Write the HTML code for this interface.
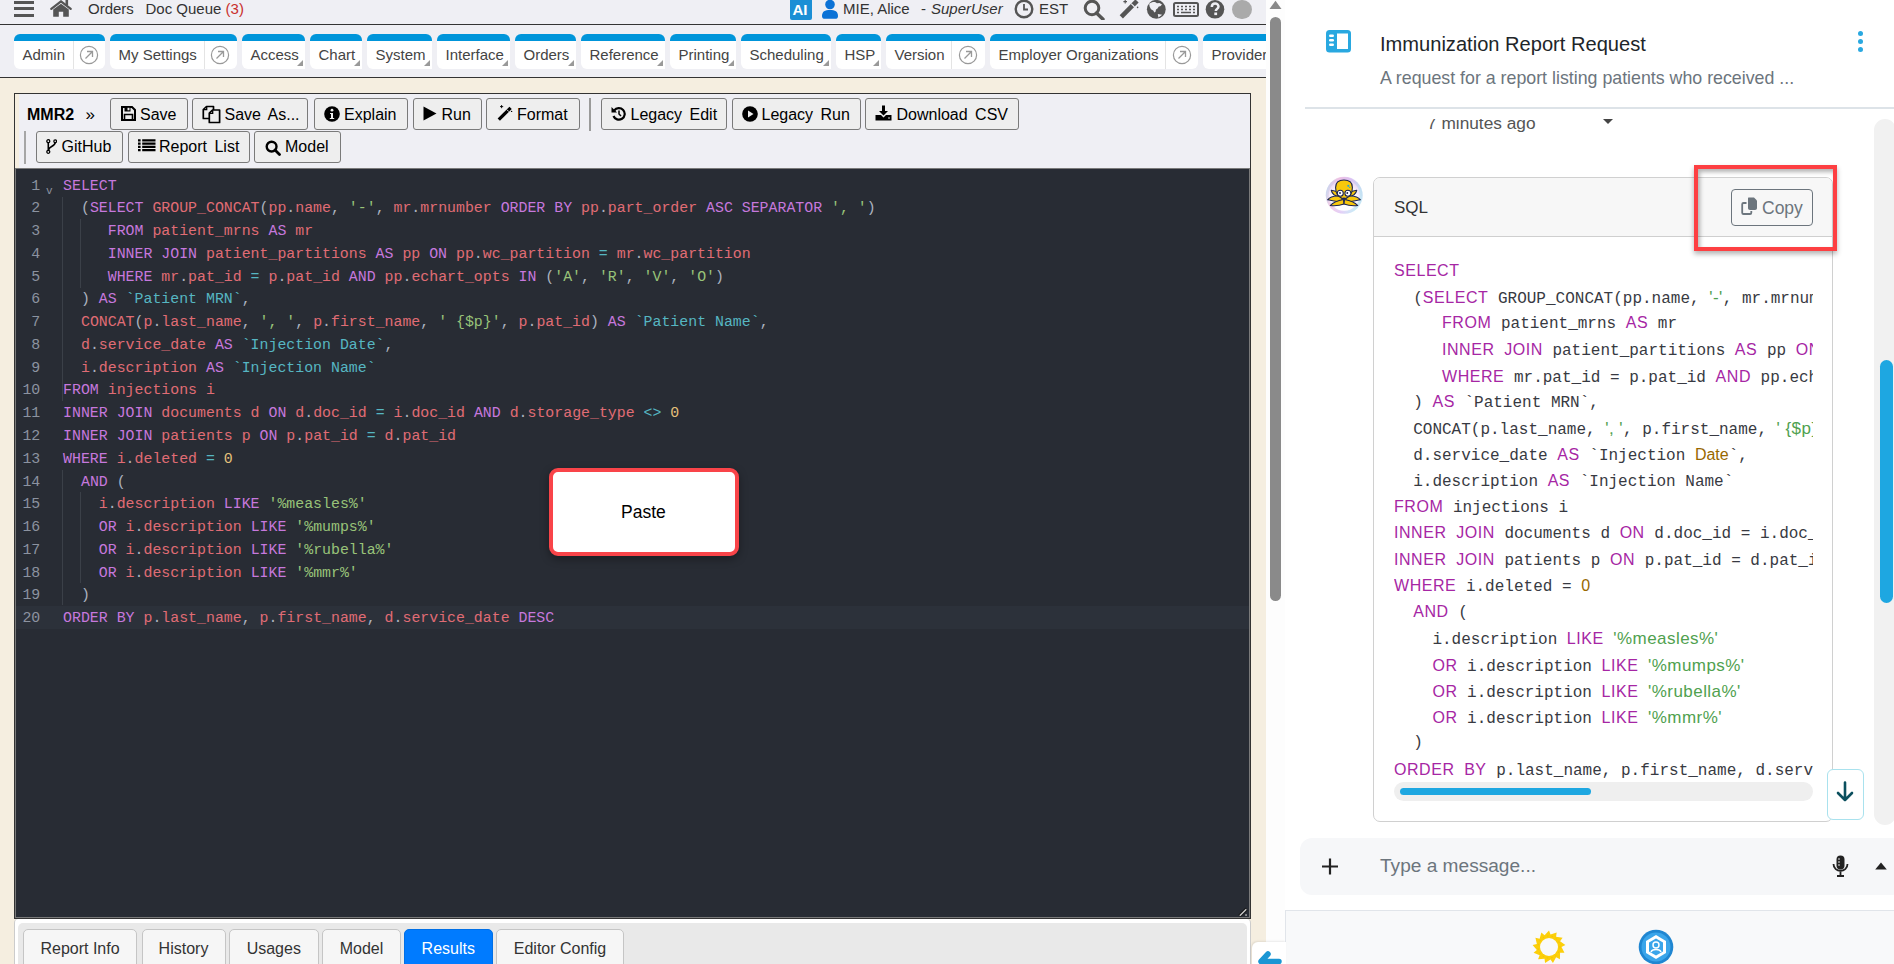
<!DOCTYPE html><html><head><meta charset="utf-8"><style>
*{box-sizing:border-box}
html,body{margin:0;padding:0}
body{width:1894px;height:964px;overflow:hidden;position:relative;background:#fff;font-family:"Liberation Sans",sans-serif}
.a{position:absolute}
.tab{position:absolute;top:34px;height:35px;background:#fff;border-top:7px solid #0095da;border-radius:6px 6px 0 6px}
.tab.r{border-radius:6px}
.tri{position:absolute;right:2px;bottom:3px;width:0;height:0;border-left:6px solid transparent;border-bottom:6px solid #999}
.sep{position:absolute;top:0;bottom:0;width:1px;background:#e4e4e4}
.btn{position:absolute;height:32px;background:#eeeeee;border:1px solid #7a7a7a;border-radius:3px}
.k{color:#c678dd}.i{color:#e06c75}.s{color:#98c379}.b{color:#56b6c2}.n{color:#e5c07b}.p{color:#abb2bf}.o{color:#56b6c2}
.rk{color:#a626a4;font-family:"Liberation Sans",sans-serif;font-size:16px;letter-spacing:0.55px}
.rs{color:#50a14f;font-family:"Liberation Sans",sans-serif;font-size:17px;letter-spacing:0.45px}
.rn{color:#986801;font-family:"Liberation Sans",sans-serif;font-size:16px}
</style></head><body>
<div class="a" style="left:0;top:0;width:1266px;height:24px;background:#efeff4"></div>
<div class="a" style="left:0;top:24px;width:1266px;height:1px;background:#333"></div>
<div class="a" style="left:0;top:25px;width:1266px;height:52px;background:#efeff4"></div>
<div class="a" style="left:0;top:77px;width:1266px;height:1px;background:#333"></div>
<div class="a" style="left:0;top:78px;width:1266px;height:886px;background:#f5eee0"></div>
<div class="a" style="left:14px;top:1px;width:20px;height:3px;background:#555"></div>
<div class="a" style="left:14px;top:7px;width:20px;height:3px;background:#555"></div>
<div class="a" style="left:14px;top:14px;width:20px;height:3px;background:#555"></div>
<svg class="a" style="left:50px;top:0px" width="22" height="18" viewBox="0 0 22 18"><path d="M1.3 8.8 L11 1.3 L20.7 8.8" fill="none" stroke="#555" stroke-width="2.3" stroke-linecap="round" stroke-linejoin="round"/><rect x="15.5" y="0" width="2.6" height="5.5" fill="#555"/><path d="M3.2 9.6 L11 3.8 L18.8 9.6 V16.8 H13.2 V11.8 H8.8 V16.8 H3.2Z" fill="#555"/></svg>
<div style="position:absolute;left:88px;top:0.12px;font-family:'Liberation Sans', sans-serif;font-size:15px;color:#333;font-weight:400;font-style:normal;line-height:normal;white-space:pre;">Orders</div>
<div style="position:absolute;left:145.5px;top:0.12px;font-family:'Liberation Sans', sans-serif;font-size:15px;color:#333;font-weight:400;font-style:normal;line-height:normal;white-space:pre;">Doc Queue <span style="color:#c9302c">(3)</span></div>
<div class="a" style="left:790px;top:0;width:22px;height:20px;background:#1b8fd5;border-radius:0 0 2px 2px"></div>
<div style="position:absolute;left:792.5px;top:0.92px;font-family:'Liberation Sans', sans-serif;font-size:15px;color:#fff;font-weight:700;font-style:normal;line-height:normal;white-space:pre;">AI</div>
<svg class="a" style="left:821px;top:0" width="18" height="19" viewBox="0 0 18 19"><circle cx="9" cy="4.5" r="4.8" fill="#0b72d6"/><path d="M1 16 C1 11.5 4 10 9 10 C14 10 17 11.5 17 16 C17 18 16 18.8 14 18.8 H4 C2 18.8 1 18 1 16Z" fill="#0b72d6"/></svg>
<div style="position:absolute;left:843px;top:0.12px;font-family:'Liberation Sans', sans-serif;font-size:15px;color:#333;font-weight:400;font-style:normal;line-height:normal;white-space:pre;">MIE, Alice</div>
<div style="position:absolute;left:921px;top:0.12px;font-family:'Liberation Sans', sans-serif;font-size:15px;color:#333;font-weight:400;font-style:normal;line-height:normal;white-space:pre;">-</div>
<div style="position:absolute;left:931px;top:0.12px;font-family:'Liberation Sans', sans-serif;font-size:15px;color:#333;font-weight:400;font-style:italic;line-height:normal;white-space:pre;">SuperUser</div>
<svg class="a" style="left:1014px;top:0" width="20" height="19" viewBox="0 0 20 19"><circle cx="10" cy="9" r="8.3" fill="none" stroke="#555" stroke-width="2.4"/><path d="M10 4 V9.5 H14" fill="none" stroke="#555" stroke-width="1.8"/></svg>
<div style="position:absolute;left:1039px;top:0.12px;font-family:'Liberation Sans', sans-serif;font-size:15px;color:#333;font-weight:400;font-style:normal;line-height:normal;white-space:pre;">EST</div>
<svg class="a" style="left:1083px;top:0" width="22" height="20" viewBox="0 0 22 20"><circle cx="9" cy="8" r="6.8" fill="none" stroke="#555" stroke-width="3"/><path d="M13.5 13 L20 19.3" stroke="#555" stroke-width="3.4" stroke-linecap="round"/></svg>
<svg class="a" style="left:1118px;top:0" width="22" height="19" viewBox="0 0 22 19"><path d="M3.3 16.8 L19 1" stroke="#555" stroke-width="4.6"/><path d="M13.2 3.6 L16.6 7" stroke="#efeff4" stroke-width="1.1"/><path d="M5.4 1.6 H9 M7.2 0 V3.4" stroke="#555" stroke-width="1.1"/><circle cx="19.6" cy="7.4" r="0.8" fill="#555"/></svg>
<svg class="a" style="left:1146px;top:0" width="21" height="19" viewBox="0 0 21 19"><circle cx="10.3" cy="9.3" r="9.4" fill="#555"/><path d="M3.2 3.8 C5 2.3 7 1.8 9 2 L11 3.3 L13.5 3 L16 4.6 L14.3 6.2 L12.8 6.4 L11.5 8.4 L10 9.5 L9.5 11.8 L8.4 12.6 L7.2 10.6 L5 9.2 L3.6 6.6Z M11.8 14 L16.2 14.8 L12.4 17.6Z" fill="#efeff4"/></svg>
<svg class="a" style="left:1173px;top:2px" width="26" height="15" viewBox="0 0 26 15"><rect x="1" y="1" width="24" height="13" rx="1.5" fill="none" stroke="#555" stroke-width="2"/><path d="M4 4.5 H6 M8 4.5 H10 M12 4.5 H14 M16 4.5 H18 M20 4.5 H22 M4 7.5 H6 M8 7.5 H10 M12 7.5 H14 M16 7.5 H18 M20 7.5 H22 M4 10.5 H6 M8 10.5 H18 M20 10.5 H22" stroke="#555" stroke-width="1.6"/></svg>
<svg class="a" style="left:1205px;top:0" width="20" height="19" viewBox="0 0 20 19"><circle cx="10" cy="9.3" r="9.3" fill="#555"/><path d="M6.8 7 C6.8 4.5 8.5 3.5 10.2 3.5 C12 3.5 13.5 4.8 13.5 6.5 C13.5 8.8 10.8 9 10.8 11" fill="none" stroke="#efeff4" stroke-width="2.5"/><rect x="9.3" y="12.5" width="2.8" height="2.6" fill="#efeff4"/></svg>
<div class="a" style="left:1232px;top:-0.5px;width:19.5px;height:19.5px;border-radius:50%;background:#aaa"></div>
<div class="tab r" style="left:14px;width:91px">
<div class="sep" style="left:58.5px"></div>
</div>
<div style="position:absolute;left:22.5px;top:46.02px;font-family:'Liberation Sans', sans-serif;font-size:15px;color:#444;font-weight:400;font-style:normal;line-height:normal;white-space:pre;">Admin</div>
<svg class="a" style="left:78.75px;top:44.5px" width="20" height="20" viewBox="0 0 20 20"><circle cx="10" cy="10" r="8.6" fill="none" stroke="#999" stroke-width="1.2"/><path d="M6.5 13.5 L13.5 6.5 M8 6.5 H13.5 V12" fill="none" stroke="#999" stroke-width="1.3"/></svg>
<div class="tab r" style="left:110px;width:127px">
<div class="sep" style="left:93.5px"></div>
</div>
<div style="position:absolute;left:118.5px;top:46.02px;font-family:'Liberation Sans', sans-serif;font-size:15px;color:#444;font-weight:400;font-style:normal;line-height:normal;white-space:pre;">My Settings</div>
<svg class="a" style="left:210.25px;top:44.5px" width="20" height="20" viewBox="0 0 20 20"><circle cx="10" cy="10" r="8.6" fill="none" stroke="#999" stroke-width="1.2"/><path d="M6.5 13.5 L13.5 6.5 M8 6.5 H13.5 V12" fill="none" stroke="#999" stroke-width="1.3"/></svg>
<div class="tab" style="left:242px;width:63px">
<div class="tri"></div>
</div>
<div style="position:absolute;left:250.5px;top:46.02px;font-family:'Liberation Sans', sans-serif;font-size:15px;color:#444;font-weight:400;font-style:normal;line-height:normal;white-space:pre;">Access</div>
<div class="tab" style="left:310px;width:52px">
<div class="tri"></div>
</div>
<div style="position:absolute;left:318.5px;top:46.02px;font-family:'Liberation Sans', sans-serif;font-size:15px;color:#444;font-weight:400;font-style:normal;line-height:normal;white-space:pre;">Chart</div>
<div class="tab" style="left:367px;width:65px">
<div class="tri"></div>
</div>
<div style="position:absolute;left:375.5px;top:46.02px;font-family:'Liberation Sans', sans-serif;font-size:15px;color:#444;font-weight:400;font-style:normal;line-height:normal;white-space:pre;">System</div>
<div class="tab" style="left:437px;width:73px">
<div class="tri"></div>
</div>
<div style="position:absolute;left:445.5px;top:46.02px;font-family:'Liberation Sans', sans-serif;font-size:15px;color:#444;font-weight:400;font-style:normal;line-height:normal;white-space:pre;">Interface</div>
<div class="tab" style="left:515px;width:61px">
<div class="tri"></div>
</div>
<div style="position:absolute;left:523.5px;top:46.02px;font-family:'Liberation Sans', sans-serif;font-size:15px;color:#444;font-weight:400;font-style:normal;line-height:normal;white-space:pre;">Orders</div>
<div class="tab" style="left:581px;width:84px">
<div class="tri"></div>
</div>
<div style="position:absolute;left:589.5px;top:46.02px;font-family:'Liberation Sans', sans-serif;font-size:15px;color:#444;font-weight:400;font-style:normal;line-height:normal;white-space:pre;">Reference</div>
<div class="tab" style="left:670px;width:66px">
<div class="tri"></div>
</div>
<div style="position:absolute;left:678.5px;top:46.02px;font-family:'Liberation Sans', sans-serif;font-size:15px;color:#444;font-weight:400;font-style:normal;line-height:normal;white-space:pre;">Printing</div>
<div class="tab" style="left:741px;width:90px">
<div class="tri"></div>
</div>
<div style="position:absolute;left:749.5px;top:46.02px;font-family:'Liberation Sans', sans-serif;font-size:15px;color:#444;font-weight:400;font-style:normal;line-height:normal;white-space:pre;">Scheduling</div>
<div class="tab" style="left:836px;width:45px">
<div class="tri"></div>
</div>
<div style="position:absolute;left:844.5px;top:46.02px;font-family:'Liberation Sans', sans-serif;font-size:15px;color:#444;font-weight:400;font-style:normal;line-height:normal;white-space:pre;">HSP</div>
<div class="tab r" style="left:886px;width:99px">
<div class="sep" style="left:65px"></div>
</div>
<div style="position:absolute;left:894.5px;top:46.02px;font-family:'Liberation Sans', sans-serif;font-size:15px;color:#444;font-weight:400;font-style:normal;line-height:normal;white-space:pre;">Version</div>
<svg class="a" style="left:958.0px;top:44.5px" width="20" height="20" viewBox="0 0 20 20"><circle cx="10" cy="10" r="8.6" fill="none" stroke="#999" stroke-width="1.2"/><path d="M6.5 13.5 L13.5 6.5 M8 6.5 H13.5 V12" fill="none" stroke="#999" stroke-width="1.3"/></svg>
<div class="tab r" style="left:990px;width:208px">
<div class="sep" style="left:175px"></div>
</div>
<div style="position:absolute;left:998.5px;top:46.02px;font-family:'Liberation Sans', sans-serif;font-size:15px;color:#444;font-weight:400;font-style:normal;line-height:normal;white-space:pre;">Employer Organizations</div>
<svg class="a" style="left:1171.5px;top:44.5px" width="20" height="20" viewBox="0 0 20 20"><circle cx="10" cy="10" r="8.6" fill="none" stroke="#999" stroke-width="1.2"/><path d="M6.5 13.5 L13.5 6.5 M8 6.5 H13.5 V12" fill="none" stroke="#999" stroke-width="1.3"/></svg>
<div class="tab r" style="left:1203px;width:97px">
</div>
<div style="position:absolute;left:1211.5px;top:46.02px;font-family:'Liberation Sans', sans-serif;font-size:15px;color:#444;font-weight:400;font-style:normal;line-height:normal;white-space:pre;">Provider</div>
<div class="a" style="left:14px;top:93px;width:1237px;height:826px;border:1px solid #333;background:#efeff4"></div>
<div class="a" style="left:15px;top:94px;width:4px;height:74px;background:#f5eee0"></div>
<div style="position:absolute;left:27px;top:105.92px;font-family:'Liberation Sans', sans-serif;font-size:16px;color:#000;font-weight:700;font-style:normal;line-height:normal;white-space:pre;">MMR2</div>
<div style="position:absolute;left:85.5px;top:105.01px;font-family:'Liberation Sans', sans-serif;font-size:17px;color:#000;font-weight:400;font-style:normal;line-height:normal;white-space:pre;">»</div>
<div class="btn" style="left:110px;top:98px;width:78px"></div>
<svg class="a" style="left:121px;top:106px" width="15" height="15" viewBox="0 0 15 15"><path d="M1 1 H11 L14 4 V14 H1 Z" fill="none" stroke="#000" stroke-width="2"/><rect x="3.5" y="1" width="6" height="4.5" fill="#000"/><rect x="6.5" y="1.8" width="2" height="2.5" fill="#eee"/><path d="M3.5 14 V8.5 H11.5 V14" fill="none" stroke="#000" stroke-width="1.6"/></svg>
<div style="position:absolute;left:140px;top:105.82px;font-family:'Liberation Sans', sans-serif;font-size:16px;color:#000;font-weight:400;font-style:normal;line-height:normal;white-space:pre;word-spacing:3px">Save</div>
<div class="btn" style="left:192px;top:98px;width:116px"></div>
<svg class="a" style="left:202px;top:104.5px" width="19" height="19" viewBox="0 0 19 19"><path d="M4.5 1.5 H11.5 V13.5 H1.3 V4.5 Z" fill="#eee" stroke="#000" stroke-width="1.7" stroke-linejoin="round"/><path d="M1.5 4.7 H4.7 V1.5" fill="none" stroke="#000" stroke-width="1.3"/><path d="M10.5 5 H17.6 V17.5 H7.3 V8.2 Z" fill="#eee" stroke="#000" stroke-width="1.7" stroke-linejoin="round"/><path d="M7.5 8.4 H10.7 V5.2" fill="none" stroke="#000" stroke-width="1.3"/></svg>
<div style="position:absolute;left:224.5px;top:105.82px;font-family:'Liberation Sans', sans-serif;font-size:16px;color:#000;font-weight:400;font-style:normal;line-height:normal;white-space:pre;word-spacing:3px">Save As...</div>
<div class="btn" style="left:314px;top:98px;width:94px"></div>
<svg class="a" style="left:324px;top:106px" width="16" height="16" viewBox="0 0 16 16"><circle cx="8" cy="8" r="7.8" fill="#000"/><circle cx="8" cy="4.2" r="1.4" fill="#eee"/><path d="M6 7 H9 V12 H10.2 V13 H5.8 V12 H7 V8 H6Z" fill="#eee"/></svg>
<div style="position:absolute;left:344px;top:105.82px;font-family:'Liberation Sans', sans-serif;font-size:16px;color:#000;font-weight:400;font-style:normal;line-height:normal;white-space:pre;word-spacing:3px">Explain</div>
<div class="btn" style="left:413px;top:98px;width:69px"></div>
<svg class="a" style="left:423px;top:106px" width="14" height="15" viewBox="0 0 14 15"><path d="M0.5 0.5 L13.5 7.5 L0.5 14.5 Z" fill="#000"/></svg>
<div style="position:absolute;left:441.5px;top:105.82px;font-family:'Liberation Sans', sans-serif;font-size:16px;color:#000;font-weight:400;font-style:normal;line-height:normal;white-space:pre;word-spacing:3px">Run</div>
<div class="btn" style="left:486px;top:98px;width:94px"></div>
<svg class="a" style="left:496.5px;top:105px" width="16" height="16" viewBox="0 0 16 16"><path d="M1.8 14.6 L13.6 2.8" stroke="#000" stroke-width="3.3"/><path d="M9.8 4.6 L11.8 6.6" stroke="#eee" stroke-width="0.9"/><path d="M3 1.6 H6.2 M4.6 0 V3.2" stroke="#000" stroke-width="0.9"/><circle cx="14.6" cy="6.4" r="0.7" fill="#000"/></svg>
<div style="position:absolute;left:517px;top:105.82px;font-family:'Liberation Sans', sans-serif;font-size:16px;color:#000;font-weight:400;font-style:normal;line-height:normal;white-space:pre;word-spacing:3px">Format</div>
<div class="a" style="left:589px;top:98px;width:2px;height:32.5px;background:#9a9a9a"></div>
<div class="btn" style="left:601px;top:98px;width:126px"></div>
<svg class="a" style="left:611px;top:106px" width="15" height="15" viewBox="0 0 15 15"><path d="M3.2 4.5 A5.8 5.8 0 1 1 2.5 10" fill="none" stroke="#000" stroke-width="2.2"/><path d="M0.5 1 V6.5 H6 Z" fill="#000"/><path d="M8 4.5 V8 L10 10" fill="none" stroke="#000" stroke-width="1.5"/></svg>
<div style="position:absolute;left:630.5px;top:105.82px;font-family:'Liberation Sans', sans-serif;font-size:16px;color:#000;font-weight:400;font-style:normal;line-height:normal;white-space:pre;word-spacing:3px">Legacy Edit</div>
<div class="btn" style="left:732px;top:98px;width:129px"></div>
<svg class="a" style="left:742px;top:106px" width="16" height="16" viewBox="0 0 16 16"><circle cx="8" cy="8" r="7.8" fill="#000"/><path d="M6 4.5 L11.5 8 L6 11.5Z" fill="#eee"/></svg>
<div style="position:absolute;left:761.5px;top:105.82px;font-family:'Liberation Sans', sans-serif;font-size:16px;color:#000;font-weight:400;font-style:normal;line-height:normal;white-space:pre;word-spacing:3px">Legacy Run</div>
<div class="btn" style="left:865px;top:98px;width:154px"></div>
<svg class="a" style="left:875px;top:105px" width="17" height="16" viewBox="0 0 17 16"><path d="M7 0.5 H10 V6 H13 L8.5 10.5 L4 6 H7Z" fill="#000"/><path d="M0.5 10 H6 L8.5 12.5 L11 10 H16.5 V15.5 H0.5Z" fill="#000"/><circle cx="14" cy="13" r="0.8" fill="#eee"/></svg>
<div style="position:absolute;left:896.5px;top:105.82px;font-family:'Liberation Sans', sans-serif;font-size:16px;color:#000;font-weight:400;font-style:normal;line-height:normal;white-space:pre;word-spacing:3px">Download CSV</div>
<div class="a" style="left:24px;top:131px;width:1.7px;height:32.5px;background:#a6a6a6"></div>
<div class="btn" style="left:36px;top:131px;width:86.5px"></div>
<svg class="a" style="left:45.5px;top:139px" width="11" height="15" viewBox="0 0 11 15"><circle cx="2.3" cy="2.2" r="1.5" fill="none" stroke="#000" stroke-width="1.3"/><circle cx="2.3" cy="12.8" r="1.5" fill="none" stroke="#000" stroke-width="1.3"/><circle cx="9.2" cy="2.2" r="1.4" fill="none" stroke="#000" stroke-width="1.2"/><path d="M2.3 3.7 V11.3 M9.2 3.6 C9.2 7.5 3 7 2.6 11" fill="none" stroke="#000" stroke-width="1.6"/></svg>
<div style="position:absolute;left:61.5px;top:138.02px;font-family:'Liberation Sans', sans-serif;font-size:16px;color:#000;font-weight:400;font-style:normal;line-height:normal;white-space:pre;word-spacing:3px">GitHub</div>
<div class="btn" style="left:127.5px;top:131px;width:122.5px"></div>
<svg class="a" style="left:137.5px;top:139px" width="18" height="13" viewBox="0 0 18 13"><path d="M0 1.3 H2.6 M4.2 1.3 H17.5 M0 4.6 H2.6 M4.2 4.6 H17.5 M0 7.9 H2.6 M4.2 7.9 H17.5 M0 11.2 H2.6 M4.2 11.2 H17.5" stroke="#000" stroke-width="2.2"/></svg>
<div style="position:absolute;left:159px;top:138.02px;font-family:'Liberation Sans', sans-serif;font-size:16px;color:#000;font-weight:400;font-style:normal;line-height:normal;white-space:pre;word-spacing:3px">Report List</div>
<div class="btn" style="left:254px;top:131px;width:86.5px"></div>
<svg class="a" style="left:264.5px;top:139.5px" width="16" height="16" viewBox="0 0 16 16"><circle cx="6.6" cy="6.6" r="4.9" fill="none" stroke="#000" stroke-width="2.4"/><path d="M10 10 L14.5 14.5" stroke="#000" stroke-width="2.8" stroke-linecap="round"/></svg>
<div style="position:absolute;left:285px;top:138.02px;font-family:'Liberation Sans', sans-serif;font-size:16px;color:#000;font-weight:400;font-style:normal;line-height:normal;white-space:pre;word-spacing:3px">Model</div>
<div class="a" style="left:15px;top:168px;width:1235px;height:750px;border:1px solid #7a7a7a;background:#282c34"></div>
<div class="a" style="left:16px;top:606px;width:1233px;height:22.8px;background:#2c313a"></div>
<div class="a" style="left:62px;top:197px;width:1px;height:204px;background:#3b4048"></div>
<div class="a" style="left:80px;top:219px;width:1px;height:69px;background:#3b4048"></div>
<div class="a" style="left:62px;top:470px;width:1px;height:135px;background:#3b4048"></div>
<div class="a" style="left:80px;top:492px;width:1px;height:91px;background:#3b4048"></div>
<div class="a" style="left:31.37px;top:177.51px;font-family:'Liberation Mono', monospace;font-size:14.88px;line-height:normal;color:#8c93a0;white-space:pre">1</div>
<div class="a" style="left:63.1px;top:177.51px;font-family:'Liberation Mono', monospace;font-size:14.88px;line-height:normal;white-space:pre"><span class="k">SELECT</span></div>
<div class="a" style="left:31.37px;top:200.28px;font-family:'Liberation Mono', monospace;font-size:14.88px;line-height:normal;color:#8c93a0;white-space:pre">2</div>
<div class="a" style="left:63.1px;top:200.28px;font-family:'Liberation Mono', monospace;font-size:14.88px;line-height:normal;white-space:pre">  <span class="p">(</span><span class="k">SELECT</span> <span class="i">GROUP_CONCAT</span><span class="p">(</span><span class="i">pp</span><span class="p">.</span><span class="i">name</span><span class="p">,</span> <span class="s">&#x27;-&#x27;</span><span class="p">,</span> <span class="i">mr</span><span class="p">.</span><span class="i">mrnumber</span> <span class="k">ORDER</span> <span class="k">BY</span> <span class="i">pp</span><span class="p">.</span><span class="i">part_order</span> <span class="k">ASC</span> <span class="k">SEPARATOR</span> <span class="s">&#x27;, &#x27;</span><span class="p">)</span></div>
<div class="a" style="left:31.37px;top:223.05px;font-family:'Liberation Mono', monospace;font-size:14.88px;line-height:normal;color:#8c93a0;white-space:pre">3</div>
<div class="a" style="left:63.1px;top:223.05px;font-family:'Liberation Mono', monospace;font-size:14.88px;line-height:normal;white-space:pre">     <span class="k">FROM</span> <span class="i">patient_mrns</span> <span class="k">AS</span> <span class="i">mr</span></div>
<div class="a" style="left:31.37px;top:245.82px;font-family:'Liberation Mono', monospace;font-size:14.88px;line-height:normal;color:#8c93a0;white-space:pre">4</div>
<div class="a" style="left:63.1px;top:245.82px;font-family:'Liberation Mono', monospace;font-size:14.88px;line-height:normal;white-space:pre">     <span class="k">INNER</span> <span class="k">JOIN</span> <span class="i">patient_partitions</span> <span class="k">AS</span> <span class="i">pp</span> <span class="k">ON</span> <span class="i">pp</span><span class="p">.</span><span class="i">wc_partition</span> <span class="o">=</span> <span class="i">mr</span><span class="p">.</span><span class="i">wc_partition</span></div>
<div class="a" style="left:31.37px;top:268.59px;font-family:'Liberation Mono', monospace;font-size:14.88px;line-height:normal;color:#8c93a0;white-space:pre">5</div>
<div class="a" style="left:63.1px;top:268.59px;font-family:'Liberation Mono', monospace;font-size:14.88px;line-height:normal;white-space:pre">     <span class="k">WHERE</span> <span class="i">mr</span><span class="p">.</span><span class="i">pat_id</span> <span class="o">=</span> <span class="i">p</span><span class="p">.</span><span class="i">pat_id</span> <span class="k">AND</span> <span class="i">pp</span><span class="p">.</span><span class="i">echart_opts</span> <span class="k">IN</span> <span class="p">(</span><span class="s">&#x27;A&#x27;</span><span class="p">,</span> <span class="s">&#x27;R&#x27;</span><span class="p">,</span> <span class="s">&#x27;V&#x27;</span><span class="p">,</span> <span class="s">&#x27;O&#x27;</span><span class="p">)</span></div>
<div class="a" style="left:31.37px;top:291.36px;font-family:'Liberation Mono', monospace;font-size:14.88px;line-height:normal;color:#8c93a0;white-space:pre">6</div>
<div class="a" style="left:63.1px;top:291.36px;font-family:'Liberation Mono', monospace;font-size:14.88px;line-height:normal;white-space:pre">  <span class="p">)</span> <span class="k">AS</span> <span class="b">`Patient MRN`</span><span class="p">,</span></div>
<div class="a" style="left:31.37px;top:314.13px;font-family:'Liberation Mono', monospace;font-size:14.88px;line-height:normal;color:#8c93a0;white-space:pre">7</div>
<div class="a" style="left:63.1px;top:314.13px;font-family:'Liberation Mono', monospace;font-size:14.88px;line-height:normal;white-space:pre">  <span class="i">CONCAT</span><span class="p">(</span><span class="i">p</span><span class="p">.</span><span class="i">last_name</span><span class="p">,</span> <span class="s">&#x27;, &#x27;</span><span class="p">,</span> <span class="i">p</span><span class="p">.</span><span class="i">first_name</span><span class="p">,</span> <span class="s">&#x27; {$p}&#x27;</span><span class="p">,</span> <span class="i">p</span><span class="p">.</span><span class="i">pat_id</span><span class="p">)</span> <span class="k">AS</span> <span class="b">`Patient Name`</span><span class="p">,</span></div>
<div class="a" style="left:31.37px;top:336.90px;font-family:'Liberation Mono', monospace;font-size:14.88px;line-height:normal;color:#8c93a0;white-space:pre">8</div>
<div class="a" style="left:63.1px;top:336.90px;font-family:'Liberation Mono', monospace;font-size:14.88px;line-height:normal;white-space:pre">  <span class="i">d</span><span class="p">.</span><span class="i">service_date</span> <span class="k">AS</span> <span class="b">`Injection Date`</span><span class="p">,</span></div>
<div class="a" style="left:31.37px;top:359.67px;font-family:'Liberation Mono', monospace;font-size:14.88px;line-height:normal;color:#8c93a0;white-space:pre">9</div>
<div class="a" style="left:63.1px;top:359.67px;font-family:'Liberation Mono', monospace;font-size:14.88px;line-height:normal;white-space:pre">  <span class="i">i</span><span class="p">.</span><span class="i">description</span> <span class="k">AS</span> <span class="b">`Injection Name`</span></div>
<div class="a" style="left:22.44px;top:382.44px;font-family:'Liberation Mono', monospace;font-size:14.88px;line-height:normal;color:#8c93a0;white-space:pre">10</div>
<div class="a" style="left:63.1px;top:382.44px;font-family:'Liberation Mono', monospace;font-size:14.88px;line-height:normal;white-space:pre"><span class="k">FROM</span> <span class="i">injections</span> <span class="i">i</span></div>
<div class="a" style="left:22.44px;top:405.21px;font-family:'Liberation Mono', monospace;font-size:14.88px;line-height:normal;color:#8c93a0;white-space:pre">11</div>
<div class="a" style="left:63.1px;top:405.21px;font-family:'Liberation Mono', monospace;font-size:14.88px;line-height:normal;white-space:pre"><span class="k">INNER</span> <span class="k">JOIN</span> <span class="i">documents</span> <span class="i">d</span> <span class="k">ON</span> <span class="i">d</span><span class="p">.</span><span class="i">doc_id</span> <span class="o">=</span> <span class="i">i</span><span class="p">.</span><span class="i">doc_id</span> <span class="k">AND</span> <span class="i">d</span><span class="p">.</span><span class="i">storage_type</span> <span class="o">&lt;&gt;</span> <span class="n">0</span></div>
<div class="a" style="left:22.44px;top:427.98px;font-family:'Liberation Mono', monospace;font-size:14.88px;line-height:normal;color:#8c93a0;white-space:pre">12</div>
<div class="a" style="left:63.1px;top:427.98px;font-family:'Liberation Mono', monospace;font-size:14.88px;line-height:normal;white-space:pre"><span class="k">INNER</span> <span class="k">JOIN</span> <span class="i">patients</span> <span class="i">p</span> <span class="k">ON</span> <span class="i">p</span><span class="p">.</span><span class="i">pat_id</span> <span class="o">=</span> <span class="i">d</span><span class="p">.</span><span class="i">pat_id</span></div>
<div class="a" style="left:22.44px;top:450.75px;font-family:'Liberation Mono', monospace;font-size:14.88px;line-height:normal;color:#8c93a0;white-space:pre">13</div>
<div class="a" style="left:63.1px;top:450.75px;font-family:'Liberation Mono', monospace;font-size:14.88px;line-height:normal;white-space:pre"><span class="k">WHERE</span> <span class="i">i</span><span class="p">.</span><span class="i">deleted</span> <span class="o">=</span> <span class="n">0</span></div>
<div class="a" style="left:22.44px;top:473.52px;font-family:'Liberation Mono', monospace;font-size:14.88px;line-height:normal;color:#8c93a0;white-space:pre">14</div>
<div class="a" style="left:63.1px;top:473.52px;font-family:'Liberation Mono', monospace;font-size:14.88px;line-height:normal;white-space:pre">  <span class="k">AND</span> <span class="p">(</span></div>
<div class="a" style="left:22.44px;top:496.29px;font-family:'Liberation Mono', monospace;font-size:14.88px;line-height:normal;color:#8c93a0;white-space:pre">15</div>
<div class="a" style="left:63.1px;top:496.29px;font-family:'Liberation Mono', monospace;font-size:14.88px;line-height:normal;white-space:pre">    <span class="i">i</span><span class="p">.</span><span class="i">description</span> <span class="k">LIKE</span> <span class="s">&#x27;%measles%&#x27;</span></div>
<div class="a" style="left:22.44px;top:519.06px;font-family:'Liberation Mono', monospace;font-size:14.88px;line-height:normal;color:#8c93a0;white-space:pre">16</div>
<div class="a" style="left:63.1px;top:519.06px;font-family:'Liberation Mono', monospace;font-size:14.88px;line-height:normal;white-space:pre">    <span class="k">OR</span> <span class="i">i</span><span class="p">.</span><span class="i">description</span> <span class="k">LIKE</span> <span class="s">&#x27;%mumps%&#x27;</span></div>
<div class="a" style="left:22.44px;top:541.83px;font-family:'Liberation Mono', monospace;font-size:14.88px;line-height:normal;color:#8c93a0;white-space:pre">17</div>
<div class="a" style="left:63.1px;top:541.83px;font-family:'Liberation Mono', monospace;font-size:14.88px;line-height:normal;white-space:pre">    <span class="k">OR</span> <span class="i">i</span><span class="p">.</span><span class="i">description</span> <span class="k">LIKE</span> <span class="s">&#x27;%rubella%&#x27;</span></div>
<div class="a" style="left:22.44px;top:564.60px;font-family:'Liberation Mono', monospace;font-size:14.88px;line-height:normal;color:#8c93a0;white-space:pre">18</div>
<div class="a" style="left:63.1px;top:564.60px;font-family:'Liberation Mono', monospace;font-size:14.88px;line-height:normal;white-space:pre">    <span class="k">OR</span> <span class="i">i</span><span class="p">.</span><span class="i">description</span> <span class="k">LIKE</span> <span class="s">&#x27;%mmr%&#x27;</span></div>
<div class="a" style="left:22.44px;top:587.37px;font-family:'Liberation Mono', monospace;font-size:14.88px;line-height:normal;color:#8c93a0;white-space:pre">19</div>
<div class="a" style="left:63.1px;top:587.37px;font-family:'Liberation Mono', monospace;font-size:14.88px;line-height:normal;white-space:pre">  <span class="p">)</span></div>
<div class="a" style="left:22.44px;top:610.14px;font-family:'Liberation Mono', monospace;font-size:14.88px;line-height:normal;color:#8c93a0;white-space:pre">20</div>
<div class="a" style="left:63.1px;top:610.14px;font-family:'Liberation Mono', monospace;font-size:14.88px;line-height:normal;white-space:pre"><span class="k">ORDER</span> <span class="k">BY</span> <span class="i">p</span><span class="p">.</span><span class="i">last_name</span><span class="p">,</span> <span class="i">p</span><span class="p">.</span><span class="i">first_name</span><span class="p">,</span> <span class="i">d</span><span class="p">.</span><span class="i">service_date</span> <span class="k">DESC</span></div>
<div class="a" style="left:46px;top:184.74px;font-family:'Liberation Mono', monospace;font-size:11px;line-height:normal;color:#8c93a0">v</div>
<svg class="a" style="left:1238px;top:907px" width="10" height="10" viewBox="0 0 10 10"><path d="M1.5 9 L8.5 2" stroke="#111" stroke-width="3.2"/><path d="M1.8 8.7 L8.3 2.2" stroke="#c8c8c8" stroke-width="1.5"/><rect x="7.3" y="7.3" width="1.5" height="1.5" fill="#c8c8c8"/></svg>
<div class="a" style="left:549px;top:468px;width:190px;height:88px;background:#fff;border:4px solid #f94449;border-radius:9px;box-shadow:0 3px 8px rgba(0,0,0,0.35)"></div>
<div style="position:absolute;left:621px;top:502.06px;font-family:'Liberation Sans', sans-serif;font-size:17.5px;color:#000;font-weight:400;font-style:normal;line-height:normal;white-space:pre;">Paste</div>
<div class="a" style="left:14px;top:919px;width:1237px;height:60px;background:#fff;border-left:1px solid #ccc;border-right:1px solid #ccc;border-radius:4px 4px 0 0"></div>
<div class="a" style="left:18px;top:923px;width:1229px;height:60px;background:#e9e9e9;border-radius:5px 5px 0 0"></div>
<div class="a" style="left:23px;top:929px;width:114px;height:50px;background:#f6f6f6;border:1px solid #c5c5c5;border-radius:5px 5px 0 0"></div>
<div style="position:absolute;left:80.0px;top:940.02px;font-family:'Liberation Sans', sans-serif;font-size:16px;color:#333;font-weight:400;font-style:normal;line-height:normal;white-space:pre;transform:translateX(-50%)">Report Info</div>
<div class="a" style="left:141.5px;top:929px;width:84.0px;height:50px;background:#f6f6f6;border:1px solid #c5c5c5;border-radius:5px 5px 0 0"></div>
<div style="position:absolute;left:183.5px;top:940.02px;font-family:'Liberation Sans', sans-serif;font-size:16px;color:#333;font-weight:400;font-style:normal;line-height:normal;white-space:pre;transform:translateX(-50%)">History</div>
<div class="a" style="left:229px;top:929px;width:89.5px;height:50px;background:#f6f6f6;border:1px solid #c5c5c5;border-radius:5px 5px 0 0"></div>
<div style="position:absolute;left:273.75px;top:940.02px;font-family:'Liberation Sans', sans-serif;font-size:16px;color:#333;font-weight:400;font-style:normal;line-height:normal;white-space:pre;transform:translateX(-50%)">Usages</div>
<div class="a" style="left:322px;top:929px;width:79px;height:50px;background:#f6f6f6;border:1px solid #c5c5c5;border-radius:5px 5px 0 0"></div>
<div style="position:absolute;left:361.5px;top:940.02px;font-family:'Liberation Sans', sans-serif;font-size:16px;color:#333;font-weight:400;font-style:normal;line-height:normal;white-space:pre;transform:translateX(-50%)">Model</div>
<div class="a" style="left:404px;top:929px;width:88.5px;height:50px;background:#007bff;border:1px solid #006fe6;border-radius:5px 5px 0 0"></div>
<div style="position:absolute;left:448.25px;top:940.02px;font-family:'Liberation Sans', sans-serif;font-size:16px;color:#fff;font-weight:400;font-style:normal;line-height:normal;white-space:pre;transform:translateX(-50%)">Results</div>
<div class="a" style="left:496px;top:929px;width:128px;height:50px;background:#f6f6f6;border:1px solid #c5c5c5;border-radius:5px 5px 0 0"></div>
<div style="position:absolute;left:560.0px;top:940.02px;font-family:'Liberation Sans', sans-serif;font-size:16px;color:#333;font-weight:400;font-style:normal;line-height:normal;white-space:pre;transform:translateX(-50%)">Editor Config</div>
<div class="a" style="left:1266px;top:0;width:19px;height:964px;background:#fdfdfd"></div>
<svg class="a" style="left:1269px;top:0" width="13" height="10" viewBox="0 0 13 10"><path d="M6.5 0.8 L12.5 9 H0.5Z" fill="#8a8a8a"/></svg>
<div class="a" style="left:1270px;top:17px;width:11px;height:584px;background:#8a8a8a;border-radius:5.5px"></div>
<div class="a" style="left:1285px;top:0;width:609px;height:964px;background:#fff"></div>
<svg class="a" style="left:1326px;top:30px" width="25" height="23" viewBox="0 0 25 23"><rect x="0" y="0" width="25" height="22.5" rx="3.5" fill="#29a8e0"/><rect x="11" y="3.5" width="11" height="15.5" fill="#fff"/><rect x="3" y="4.5" width="5" height="2.4" rx="1.2" fill="#fff"/><rect x="3" y="9" width="5" height="2.4" rx="1.2" fill="#fff"/><rect x="3" y="13.5" width="5" height="2.4" rx="1.2" fill="#fff"/></svg>
<div style="position:absolute;left:1380px;top:32.90px;font-family:'Liberation Sans', sans-serif;font-size:20.1px;color:#212529;font-weight:400;font-style:normal;line-height:normal;white-space:pre;">Immunization Report Request</div>
<div style="position:absolute;left:1380px;top:68.39px;font-family:'Liberation Sans', sans-serif;font-size:17.8px;color:#6c757d;font-weight:400;font-style:normal;line-height:normal;white-space:pre;">A request for a report listing patients who received ...</div>
<div class="a" style="left:1857.6px;top:31.199999999999996px;width:5.2px;height:5.2px;border-radius:50%;background:#29a8e0"></div>
<div class="a" style="left:1857.6px;top:39.0px;width:5.2px;height:5.2px;border-radius:50%;background:#29a8e0"></div>
<div class="a" style="left:1857.6px;top:46.8px;width:5.2px;height:5.2px;border-radius:50%;background:#29a8e0"></div>
<div class="a" style="left:1305px;top:107px;width:589px;height:2px;background:#dde3e8"></div>
<div class="a" style="left:1285px;top:119px;width:589px;height:716px;overflow:hidden">
<div style="position:absolute;left:142.00px;top:-5.66px;font-family:'Liberation Sans', sans-serif;font-size:17.3px;color:#555;font-weight:400;line-height:normal;white-space:pre;">7 minutes ago</div>
<svg style="position:absolute;left:314px;top:-4px" width="18" height="9" viewBox="0 0 18 9"><path d="M0 0 H18 L9 9Z" fill="#444"/></svg>
</div>
<svg class="a" style="left:1322px;top:174px" width="44" height="42" viewBox="0 0 44 42">
<defs><linearGradient id="ag" x1="0" y1="0" x2="1" y2="0.3"><stop offset="0" stop-color="#9fe3f0"/><stop offset="0.3" stop-color="#f2b3d6"/><stop offset="0.65" stop-color="#cfb0f2"/><stop offset="1" stop-color="#a5e6f2"/></linearGradient>
<radialGradient id="ag2" cx="0.5" cy="0.62" r="0.55"><stop offset="0.55" stop-color="#ffffff"/><stop offset="1" stop-color="#e9d3f4"/></radialGradient></defs>
<circle cx="22.2" cy="21.3" r="18.3" fill="url(#ag2)"/>
<circle cx="22.2" cy="21.3" r="17" fill="none" stroke="url(#ag)" stroke-width="3" opacity="0.55"/>
<g fill="#f8c80c" stroke="#1c2450" stroke-width="1.1" stroke-linejoin="round">
<path d="M17.5 23 C13 22 10 20 9.3 16.3 C12.5 17 15.5 17.5 18.5 18.5Z"/>
<path d="M26.5 23 C31 22 34 20 34.7 16.3 C31.5 17 28.5 17.5 25.5 18.5Z"/>
<path d="M19.5 22.5 C14 21.5 8.5 22.5 5.6 25.8 C10 26.5 15 27.5 20.5 28.5Z"/>
<path d="M24.5 22.5 C30 21.5 35.5 22.5 38.4 25.8 C34 26.5 29 27.5 23.5 28.5Z"/>
<path d="M21.5 25.5 C16 26.5 11 28.5 8.3 31.5 C13 32 18 31.5 22 30Z"/>
<path d="M22.5 25.5 C28 26.5 33 28.5 35.7 31.5 C31 32 26 31.5 22 30Z"/>
<path d="M13.6 13.5 C13.6 8.2 17 6 22 6 C27 6 30.4 8.2 30.4 13.5 C30.4 19 28 23.5 22 25 C16 23.5 13.6 19 13.6 13.5Z"/>
</g>
<circle cx="18.3" cy="19.2" r="3" fill="#fff" stroke="#1c2450" stroke-width="1.1"/>
<circle cx="25.9" cy="19.2" r="3" fill="#fff" stroke="#1c2450" stroke-width="1.1"/>
<circle cx="18" cy="19" r="0.9" fill="#1c2450"/><circle cx="25.3" cy="19" r="0.9" fill="#1c2450"/>
<ellipse cx="22" cy="24.3" rx="1.3" ry="0.7" fill="#1c2450"/>
<circle cx="26.3" cy="11.8" r="1.1" fill="#2aa7d8"/><circle cx="27.8" cy="13.4" r="0.7" fill="#2aa7d8"/>
</svg>
<div class="a" style="left:1373px;top:177px;width:460px;height:645px;background:#fff;border:1px solid #d0d0d0;border-radius:7px;overflow:hidden">
<div style="position:absolute;left:0;top:0;width:458px;height:59px;background:#f7f7f7;border-bottom:1px solid #cfcfcf"></div>
</div>
<div style="position:absolute;left:1394px;top:197.61px;font-family:'Liberation Sans', sans-serif;font-size:17px;color:#333;font-weight:400;font-style:normal;line-height:normal;white-space:pre;">SQL</div>
<div class="a" style="left:1731px;top:188.5px;width:82px;height:37px;border:1px solid #6c757d;border-radius:4px;background:#f7f7f7"></div>
<svg class="a" style="left:1741px;top:197px" width="17" height="18" viewBox="0 0 17 18"><path d="M7.5 0.5 H13 L16 3.5 V11 C16 12.2 15.2 13 14 13 H9 C7.8 13 7 12.2 7 11 V1.5 C7 1 7.2 0.5 7.5 0.5Z" fill="#6c757d"/><path d="M5.5 6 H2.5 C1.7 6 1.2 6.5 1.2 7.3 V15.7 C1.2 16.5 1.7 17 2.5 17 H9 C9.8 17 10.3 16.5 10.3 15.7 V14" fill="none" stroke="#6c757d" stroke-width="1.8"/></svg>
<div style="position:absolute;left:1762px;top:198.16px;font-family:'Liberation Sans', sans-serif;font-size:17.5px;color:#6c757d;font-weight:400;font-style:normal;line-height:normal;white-space:pre;">Copy</div>
<div class="a" style="left:1694px;top:165px;width:142.5px;height:86px;border:4px solid #fd3f42;box-shadow:0 3px 5px rgba(0,0,0,0.3), inset 2px 3px 4px rgba(0,0,0,0.3)"></div>
<div class="a" style="left:1394px;top:250px;width:419px;height:530px;overflow:hidden">
<div style="position:absolute;left:0;top:11.88px;font-family:'Liberation Mono', monospace;font-size:16px;line-height:normal;color:#383a42;white-space:pre"><span class="rk">SELECT</span></div>
<div style="position:absolute;left:0;top:38.13px;font-family:'Liberation Mono', monospace;font-size:16px;line-height:normal;color:#383a42;white-space:pre">  (<span class="rk">SELECT</span> GROUP_CONCAT(pp.name, <span class="rs">&#x27;-&#x27;</span>, mr.mrnumber <span class="rk">ORDER</span> <span class="rk">BY</span> pp.part_order <span class="rk">ASC</span> <span class="rk">SEPARATOR</span> <span class="rs">&#x27;, &#x27;</span>)</div>
<div style="position:absolute;left:0;top:64.38px;font-family:'Liberation Mono', monospace;font-size:16px;line-height:normal;color:#383a42;white-space:pre">     <span class="rk">FROM</span> patient_mrns <span class="rk">AS</span> mr</div>
<div style="position:absolute;left:0;top:90.63px;font-family:'Liberation Mono', monospace;font-size:16px;line-height:normal;color:#383a42;white-space:pre">     <span class="rk">INNER</span> <span class="rk">JOIN</span> patient_partitions <span class="rk">AS</span> pp <span class="rk">ON</span> pp.wc_partition = mr.wc_partition</div>
<div style="position:absolute;left:0;top:116.88px;font-family:'Liberation Mono', monospace;font-size:16px;line-height:normal;color:#383a42;white-space:pre">     <span class="rk">WHERE</span> mr.pat_id = p.pat_id <span class="rk">AND</span> pp.echart_opts <span class="rk">IN</span> (<span class="rs">&#x27;A&#x27;</span>, <span class="rs">&#x27;R&#x27;</span>, <span class="rs">&#x27;V&#x27;</span>, <span class="rs">&#x27;O&#x27;</span>)</div>
<div style="position:absolute;left:0;top:143.13px;font-family:'Liberation Mono', monospace;font-size:16px;line-height:normal;color:#383a42;white-space:pre">  ) <span class="rk">AS</span> `Patient MRN`,</div>
<div style="position:absolute;left:0;top:169.38px;font-family:'Liberation Mono', monospace;font-size:16px;line-height:normal;color:#383a42;white-space:pre">  CONCAT(p.last_name, <span class="rs">&#x27;, &#x27;</span>, p.first_name, <span class="rs">&#x27; {$p}&#x27;</span>, p.pat_id) <span class="rk">AS</span> `Patient Name`,</div>
<div style="position:absolute;left:0;top:195.63px;font-family:'Liberation Mono', monospace;font-size:16px;line-height:normal;color:#383a42;white-space:pre">  d.service_date <span class="rk">AS</span> `Injection <span class="rn">Date</span>`,</div>
<div style="position:absolute;left:0;top:221.88px;font-family:'Liberation Mono', monospace;font-size:16px;line-height:normal;color:#383a42;white-space:pre">  i.description <span class="rk">AS</span> `Injection Name`</div>
<div style="position:absolute;left:0;top:248.13px;font-family:'Liberation Mono', monospace;font-size:16px;line-height:normal;color:#383a42;white-space:pre"><span class="rk">FROM</span> injections i</div>
<div style="position:absolute;left:0;top:274.38px;font-family:'Liberation Mono', monospace;font-size:16px;line-height:normal;color:#383a42;white-space:pre"><span class="rk">INNER</span> <span class="rk">JOIN</span> documents d <span class="rk">ON</span> d.doc_id = i.doc_id <span class="rk">AND</span> d.storage_type &lt;&gt; <span class="rn">0</span></div>
<div style="position:absolute;left:0;top:300.63px;font-family:'Liberation Mono', monospace;font-size:16px;line-height:normal;color:#383a42;white-space:pre"><span class="rk">INNER</span> <span class="rk">JOIN</span> patients p <span class="rk">ON</span> p.pat_id = d.pat_id</div>
<div style="position:absolute;left:0;top:326.88px;font-family:'Liberation Mono', monospace;font-size:16px;line-height:normal;color:#383a42;white-space:pre"><span class="rk">WHERE</span> i.deleted = <span class="rn">0</span></div>
<div style="position:absolute;left:0;top:353.13px;font-family:'Liberation Mono', monospace;font-size:16px;line-height:normal;color:#383a42;white-space:pre">  <span class="rk">AND</span> (</div>
<div style="position:absolute;left:0;top:379.38px;font-family:'Liberation Mono', monospace;font-size:16px;line-height:normal;color:#383a42;white-space:pre">    i.description <span class="rk">LIKE</span> <span class="rs">&#x27;%measles%&#x27;</span></div>
<div style="position:absolute;left:0;top:405.63px;font-family:'Liberation Mono', monospace;font-size:16px;line-height:normal;color:#383a42;white-space:pre">    <span class="rk">OR</span> i.description <span class="rk">LIKE</span> <span class="rs">&#x27;%mumps%&#x27;</span></div>
<div style="position:absolute;left:0;top:431.88px;font-family:'Liberation Mono', monospace;font-size:16px;line-height:normal;color:#383a42;white-space:pre">    <span class="rk">OR</span> i.description <span class="rk">LIKE</span> <span class="rs">&#x27;%rubella%&#x27;</span></div>
<div style="position:absolute;left:0;top:458.13px;font-family:'Liberation Mono', monospace;font-size:16px;line-height:normal;color:#383a42;white-space:pre">    <span class="rk">OR</span> i.description <span class="rk">LIKE</span> <span class="rs">&#x27;%mmr%&#x27;</span></div>
<div style="position:absolute;left:0;top:484.38px;font-family:'Liberation Mono', monospace;font-size:16px;line-height:normal;color:#383a42;white-space:pre">  )</div>
<div style="position:absolute;left:0;top:510.63px;font-family:'Liberation Mono', monospace;font-size:16px;line-height:normal;color:#383a42;white-space:pre"><span class="rk">ORDER</span> <span class="rk">BY</span> p.last_name, p.first_name, d.service_date <span class="rk">DESC</span></div>
</div>
<div class="a" style="left:1394px;top:782px;width:419px;height:19px;background:#efefef;border-radius:9.5px"></div>
<div class="a" style="left:1399.5px;top:788px;width:191.5px;height:7px;background:#1ea7e1;border-radius:3.5px"></div>
<div class="a" style="left:1827px;top:768.5px;width:37px;height:51px;background:#fff;border:1px solid #a9e2ee;border-radius:6px"></div>
<svg class="a" style="left:1836px;top:781px" width="18" height="21" viewBox="0 0 18 21"><path d="M9 1.5 V19 M2 12 L9 19 L16 12" fill="none" stroke="#0b4f5e" stroke-width="2.6" stroke-linecap="round" stroke-linejoin="round"/></svg>
<div class="a" style="left:1874px;top:119px;width:22px;height:706px;background:#f1f1f1;border-radius:11px"></div>
<div class="a" style="left:1880px;top:360px;width:13px;height:243px;background:#1ea7e1;border-radius:6.5px"></div>
<div class="a" style="left:1300px;top:838px;width:604px;height:57px;background:#f6f7f9;border-radius:12px"></div>
<svg class="a" style="left:1321px;top:858px" width="18" height="17" viewBox="0 0 18 17"><path d="M9 0.5 V16.5 M1 8.5 H17" stroke="#222" stroke-width="2.2"/></svg>
<div style="position:absolute;left:1380px;top:855.21px;font-family:'Liberation Sans', sans-serif;font-size:19.1px;color:#6c757d;font-weight:400;font-style:normal;line-height:normal;white-space:pre;">Type a message...</div>
<svg class="a" style="left:1832px;top:855px" width="17" height="22" viewBox="0 0 17 22"><rect x="4.5" y="0.5" width="8" height="14" rx="4" fill="#222"/><path d="M1.5 9 C1.5 18 15.5 18 15.5 9" fill="none" stroke="#222" stroke-width="1.8"/><path d="M8.5 16.5 V21 M5 21 H12" stroke="#222" stroke-width="1.8"/><path d="M6 4 H8 M6 7 H8 M6 10 H8" stroke="#f6f7f9" stroke-width="0.9"/></svg>
<svg class="a" style="left:1875px;top:862px" width="12" height="8" viewBox="0 0 12 8"><path d="M6 0.5 L11.8 7.5 H0.2Z" fill="#222"/></svg>
<div class="a" style="left:1285px;top:909.5px;width:609px;height:60px;background:#f8f9fa;border-top:1px solid #e1e5ea;border-left:1px solid #e1e5ea"></div>
<svg class="a" style="left:1532px;top:929px" width="35" height="36" viewBox="0 0 35 36"><polygon points="29.50,18.00 32.43,23.85 28.07,23.81 27.94,30.35 24.10,28.29 20.95,34.02 18.51,30.41 13.05,34.02 12.57,29.69 6.06,30.35 7.64,26.29 1.57,23.85 4.86,20.99 0.62,16.01 4.86,15.01 3.42,8.63 7.64,9.71 9.33,3.39 12.57,6.31 17.00,1.50 18.51,5.59 24.67,3.39 24.10,7.71 30.58,8.63 28.07,12.19 33.38,16.01" fill="#fccf0a"/><circle cx="17" cy="18" r="9" fill="#f8f9fa"/><circle cx="17" cy="18" r="11" fill="none" stroke="#e9b800" stroke-width="0.6" stroke-dasharray="1.5 3"/></svg>
<svg class="a" style="left:1638px;top:929px" width="36" height="36" viewBox="0 0 36 36"><circle cx="18" cy="18" r="17.3" fill="#1f86d1"/><circle cx="18" cy="18" r="14.5" fill="#3aa5ea"/><path d="M18 6 L28 12 V24 L18 30 L8 24 V12Z" fill="#fff"/><path d="M18 9.5 L25 13.5 V22.5 L18 26.5 L11 22.5 V13.5Z" fill="#3aa5ea"/><circle cx="18" cy="16" r="3" fill="none" stroke="#fff" stroke-width="1.5"/><path d="M13 23 C14 19.5 22 19.5 23 23" fill="none" stroke="#fff" stroke-width="1.5"/></svg>
<div class="a" style="left:1252px;top:942px;width:34px;height:30px;background:#fff;border-radius:6px 0 0 0;box-shadow:-1px -1px 2px rgba(0,0,0,0.08)"></div>
<svg class="a" style="left:1257px;top:951px" width="26" height="16" viewBox="0 0 26 16"><path d="M11 3 L4 10.5 L11 18 M4.5 10.5 H22" fill="none" stroke="#1a96d4" stroke-width="5.5" stroke-linecap="round" stroke-linejoin="round"/></svg>
</body></html>
